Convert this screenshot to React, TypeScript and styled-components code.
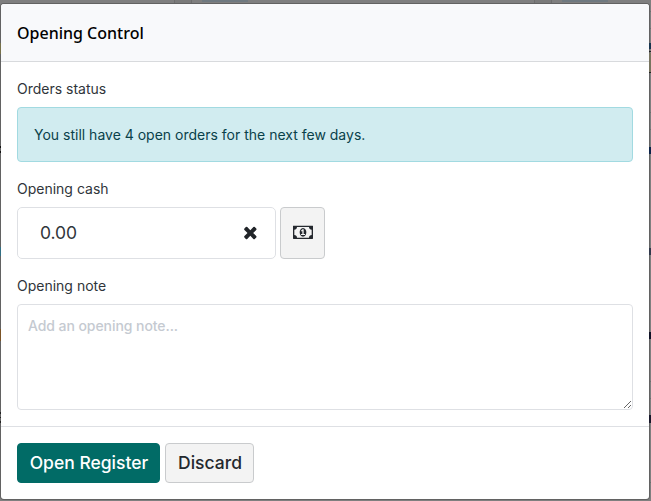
import React from 'react';
import styled, { createGlobalStyle } from 'styled-components';

const GlobalStyle = createGlobalStyle`
  *, *::before, *::after { box-sizing: border-box; }
  html, body { margin: 0; padding: 0; }
  body {
    overflow: hidden;
    font-family: Inter, sans-serif;
    font-size: 14px;
    line-height: 21px;
    color: #374151;
  }
`;

const Backdrop = styled.div`
  position: relative;
  width: 651px;
  height: 501px;
  padding: 4px 2px 2px 1px;
  background: #7f7f7f;
  overflow: hidden;
`;

const Remnant = styled.span<{ $x: number; $y: number; $w: number; $h: number; $color: string }>`
  position: absolute;
  left: ${(p) => p.$x}px;
  top: ${(p) => p.$y}px;
  width: ${(p) => p.$w}px;
  height: ${(p) => p.$h}px;
  background: ${(p) => p.$color};
`;

const Modal = styled.section`
  position: relative;
  display: flex;
  flex-direction: column;
  width: 648px;
  height: 495px;
  background: #fff;
  border-radius: 3px;
  box-shadow: 0 0 0 1px #626262;
  overflow: hidden;
`;

const Header = styled.header`
  display: flex;
  align-items: center;
  height: 58px;
  padding: 0 16px;
  background: #f8f9fb;
  border-bottom: 1px solid #d8dadd;
`;

const Title = styled.h4`
  margin: 0;
  font: 500 16px/24px 'Noto Sans', sans-serif;
  color: #000;
`;

const Body = styled.main`
  display: flex;
  flex-direction: column;
  flex: 1;
  padding: 16px 16px 0;
`;

const Label = styled.label`
  display: block;
  height: 21px;
  margin-bottom: 8px;
  color: #30353a;
`;

const Alert = styled.div`
  height: 55px;
  margin-bottom: 16px;
  padding: 16px;
  color: #09414a;
  background: #d1ecf0;
  border: 1px solid #a2dae1;
  border-radius: 4px;
`;

const CashRow = styled.div`
  display: flex;
  gap: 4px;
  height: 52px;
  margin-bottom: 16px;
`;

const CashField = styled.div`
  display: flex;
  align-items: center;
  justify-content: space-between;
  width: 259px;
  padding: 0 15px 2px 22px;
  border: 1px solid #dee0e4;
  border-radius: 5px;
  font-size: 17.5px;
  letter-spacing: -0.1px;
  color: #30353a;
`;

const Button = styled.button<{ $primary?: boolean; $width: number }>`
  display: flex;
  align-items: center;
  justify-content: center;
  width: ${(p) => p.$width}px;
  padding: 0 0 1px 1px;
  font: 500 17.5px/26px Inter, sans-serif;
  color: ${(p) => (p.$primary ? '#fff' : '#24282e')};
  background: ${(p) => (p.$primary ? '#016b66' : '#f3f3f3')};
  border: 1px solid ${(p) => (p.$primary ? '#016b66' : '#c9cbcd')};
  border-radius: 4px;
`;

const Note = styled.textarea`
  display: block;
  width: 616px;
  height: 106px;
  padding: 10px;
  font: 500 14px/21px Inter, sans-serif;
  letter-spacing: -0.07px;
  border: 1px solid #dee0e4;
  border-radius: 4px;
  outline: none;
  resize: vertical;
  &::placeholder { color: #c5cad1; opacity: 1; }
`;

const Footer = styled.footer`
  display: flex;
  gap: 5px;
  height: 73px;
  padding: 16px 16px;
  border-top: 1px solid #dee0e4;
`;

const TimesIcon = () => (
  <svg width="18.67" height="18.67" viewBox="0 0 1792 1792" fill="#212529">
    <path d="M1490 1322q0 40-28 68l-136 136q-28 28-68 28t-68-28l-294-294-294 294q-28 28-68 28t-68-28l-136-136q-28-28-28-68t28-68l294-294-294-294q-28-28-28-68t28-68l136-136q28-28 68-28t68 28l294 294 294-294q28-28 68-28t68 28l136 136q28 28 28 68t-28 68l-294 294 294 294q28 28 28 68z" />
  </svg>
);

const MoneyIcon = () => (
  <svg width="20" height="18.67" viewBox="0 0 1920 1792" fill="#24282e">
    <path d="M768 1152h384v-96h-128v-448h-114l-148 137 77 80q42-37 55-57h2v288h-128v96zm512-256q0 70-21 142t-59.5 134-101.5 101-138 39-138-39-101.5-101-59.5-134-21-142 21-142 59.5-134 101.5-101 138-39 138 39 101.5 101 59.5 134 21 142zm512 256v-512q-106 0-181-75t-75-181h-1152q0 106-75 181t-181 75v512q106 0 181 75t75 181h1152q0-106 75-181t181-75zm128-832v1152q0 26-19 45t-45 19h-1792q-26 0-45-19t-19-45v-1152q0-26 19-45t45-19h1792q26 0 45 19t19 45z" />
  </svg>
);

/* Edges of the dimmed page that stay visible around the dialog: x, y, w, h, colour. */
const remnants: Array<[number, number, number, number, string]> = [
  [174, 0, 17, 3, '#7a7a7a'], [174, 0, 1, 3, '#6d6d6d'], [191, 0, 1, 3, '#6d6d6d'],
  [202, 0, 46, 2, '#6f7980'],
  [534, 0, 17, 3, '#7a7a7a'], [534, 0, 1, 3, '#6d6d6d'], [551, 0, 1, 3, '#6d6d6d'],
  [562, 0, 46, 2, '#6f7980'],
  [0, 43, 1, 11, '#77714a'], [0, 146, 1, 2, '#111'], [0, 151, 1, 2, '#111'],
  [0, 247, 1, 9, '#316f84'], [0, 329, 1, 12, '#7b5426'],
  [0, 412, 1, 2, '#222'], [0, 417, 1, 1, '#222'], [0, 421, 1, 2, '#222'],
  [650, 11, 1, 1, '#6d6d6d'], [650, 28, 1, 1, '#6d6d6d'],
  [649, 43, 2, 6, '#17344e'], [649, 51, 2, 1, '#222'],
  [649, 53, 2, 19, '#77745f'], [649, 72, 2, 1, '#222'],
  [650, 112, 1, 1, '#6d6d6d'], [650, 129, 1, 1, '#6d6d6d'],
  [649, 147, 2, 7, '#0b2349'], [649, 248, 2, 7, '#30384b'],
  [649, 332, 2, 7, '#101226'], [650, 381, 1, 1, '#6d6d6d'],
  [650, 398, 1, 1, '#6d6d6d'], [649, 415, 2, 8, '#17172a'], [650, 482, 1, 1, '#6d6d6d'],
];

export default function App() {
  return (
    <>
      <GlobalStyle />
      <Backdrop>
        <Modal>
          <Header><Title>Opening Control</Title></Header>
          <Body>
            <Label>Orders status</Label>
            <Alert>You still have 4 open orders for the next few days.</Alert>
            <Label>Opening cash</Label>
            <CashRow>
              <CashField><span>0.00</span><TimesIcon /></CashField>
              <Button $width={45} aria-label="Count cash"><MoneyIcon /></Button>
            </CashRow>
            <Label>Opening note</Label>
            <Note placeholder="Add an opening note..." />
          </Body>
          <Footer>
            <Button $primary $width={143}>Open Register</Button>
            <Button $width={89}>Discard</Button>
          </Footer>
        </Modal>
        {remnants.map(([x, y, w, h, c]) => (
          <Remnant key={`${x}-${y}-${w}`} $x={x} $y={y} $w={w} $h={h} $color={c} />
        ))}
      </Backdrop>
    </>
  );
}
